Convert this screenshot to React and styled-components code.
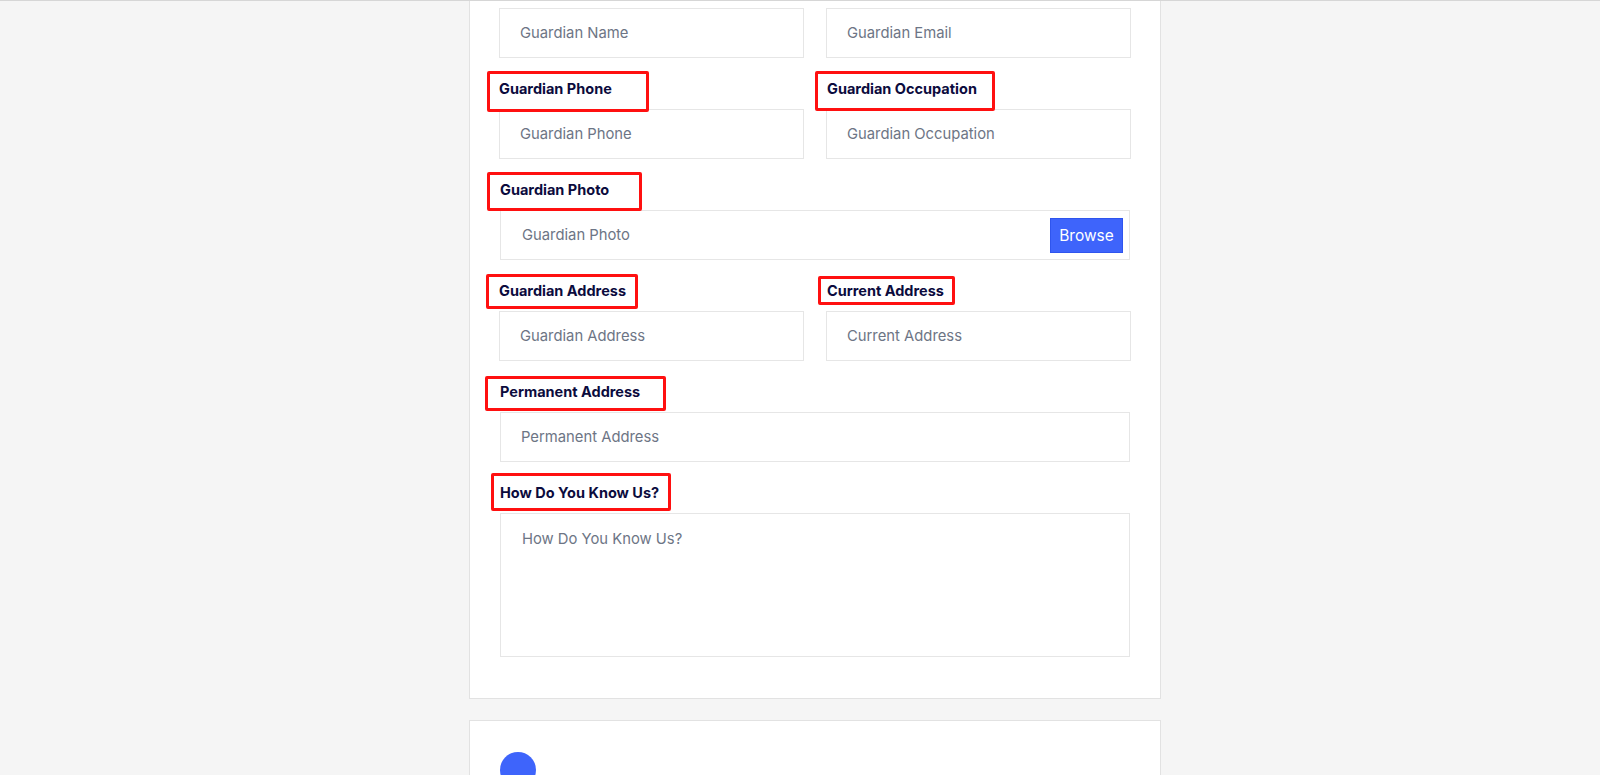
import React from "react";
import styled, { createGlobalStyle } from "styled-components";

const Global = createGlobalStyle`
  html, body { margin: 0; padding: 0; }
  body {
    background: #f5f5f5;
    font-family: "Inter", "Liberation Sans", sans-serif;
    overflow: hidden;
  }
  * { box-sizing: border-box; }
`;

const TopRule = styled.div`
  height: 1px;
  background: #d6d6d6;
`;

const Page = styled.div`
  display: flex;
  flex-direction: column;
  align-items: center;
  gap: 21px;
`;

const Card = styled.section`
  width: 692px;
  margin-left: 30px;
  background: #fff;
  border: 1px solid #e2e2e2;
  border-top: ${(p) => (p.$open ? "none" : "1px solid #e2e2e2")};
  padding: ${(p) => p.$pad};
`;

const Form = styled.div`
  display: grid;
  grid-template-columns: 1fr 1fr;
  column-gap: 22px;
  row-gap: 21px;
`;

const Field = styled.div`
  display: flex;
  flex-direction: column;
  grid-column: ${(p) => (p.$full ? "1 / span 2" : "auto")};
  padding: ${(p) => (p.$full ? "0 1px" : "0")};
`;

const LabelRow = styled.div`
  display: flex;
  padding-left: ${(p) => p.$indent || 0}px;
  margin-bottom: 10px;
`;

const Label = styled.label`
  position: relative;
  font-size: 14.5px;
  line-height: 20px;
  font-weight: 700;
  color: #0b0b3d;
`;

const Annotation = styled.span`
  position: absolute;
  border: 3px solid #ff1010;
  border-radius: 2px;
  pointer-events: none;
`;

const TextInput = styled.input`
  height: 50px;
  width: 100%;
  border: 1px solid #e6e6e6;
  background: #fff;
  padding: 0 20px;
  font-family: "Inter", "Liberation Sans", sans-serif;
  font-size: 14.8px;
  color: #333;
  outline: none;
  &::placeholder { color: #6d7585; }
`;

const FileBox = styled.div`
  height: 50px;
  border: 1px solid #e6e6e6;
  display: flex;
  align-items: center;
  justify-content: space-between;
  padding: 0 6px 0 21px;
`;

const FilePlaceholder = styled.span`
  font-size: 14.8px;
  color: #6d7585;
`;

const BrowseButton = styled.button`
  height: 35px;
  width: 73px;
  background: #3e64fb;
  border: 1px solid #2f55ee;
  color: #fff;
  font-family: "Inter", "Liberation Sans", sans-serif;
  font-size: 15.5px;
  padding: 0;
  margin-top: 1px;
`;

const TextArea = styled.textarea`
  height: 144px;
  width: 100%;
  resize: none;
  border: 1px solid #e6e6e6;
  padding: 15px 21px;
  font-family: "Inter", "Liberation Sans", sans-serif;
  font-size: 14.8px;
  line-height: 20px;
  outline: none;
  &::placeholder { color: #6d7585; }
`;

const StepDot = styled.div`
  width: 36px;
  height: 36px;
  border-radius: 50%;
  background: #3e64fb;
`;

const LabelWithBox = ({ text, box, indent }) => (
  <LabelRow $indent={indent}>
    <Label>
      {text}
      <Annotation
        style={{ left: box[0], top: box[1], width: box[2], height: box[3] }}
      />
    </Label>
  </LabelRow>
);

export default function App() {
  return (
    <>
      <Global />
      <TopRule />
      <Page>
        <Card $open $pad="7px 29px 41px 29px">
          <Form>
            <Field>
              <TextInput placeholder="Guardian Name" />
            </Field>
            <Field>
              <TextInput placeholder="Guardian Email" />
            </Field>

            <Field>
              <LabelWithBox text="Guardian Phone" box={[-12, -8, 162, 41]} />
              <TextInput placeholder="Guardian Phone" />
            </Field>
            <Field>
              <LabelWithBox text="Guardian Occupation" indent={1} box={[-12, -8, 180, 40]} />
              <TextInput placeholder="Guardian Occupation" />
            </Field>

            <Field $full>
              <LabelWithBox text="Guardian Photo" box={[-13, -8, 155, 39]} />
              <FileBox>
                <FilePlaceholder>Guardian Photo</FilePlaceholder>
                <BrowseButton type="button">Browse</BrowseButton>
              </FileBox>
            </Field>

            <Field>
              <LabelWithBox text="Guardian Address" box={[-13, -7, 152, 35]} />
              <TextInput placeholder="Guardian Address" />
            </Field>
            <Field>
              <LabelWithBox text="Current Address" indent={1} box={[-9, -5, 137, 29]} />
              <TextInput placeholder="Current Address" />
            </Field>

            <Field $full>
              <LabelWithBox text="Permanent Address" box={[-15, -6, 181, 35]} />
              <TextInput placeholder="Permanent Address" />
            </Field>

            <Field $full>
              <LabelWithBox text="How Do You Know Us?" box={[-9, -10, 180, 38]} />
              <TextArea placeholder="How Do You Know Us?" />
            </Field>
          </Form>
        </Card>
        <Card $pad="31px 30px 40px 30px">
          <StepDot />
        </Card>
      </Page>
    </>
  );
}
